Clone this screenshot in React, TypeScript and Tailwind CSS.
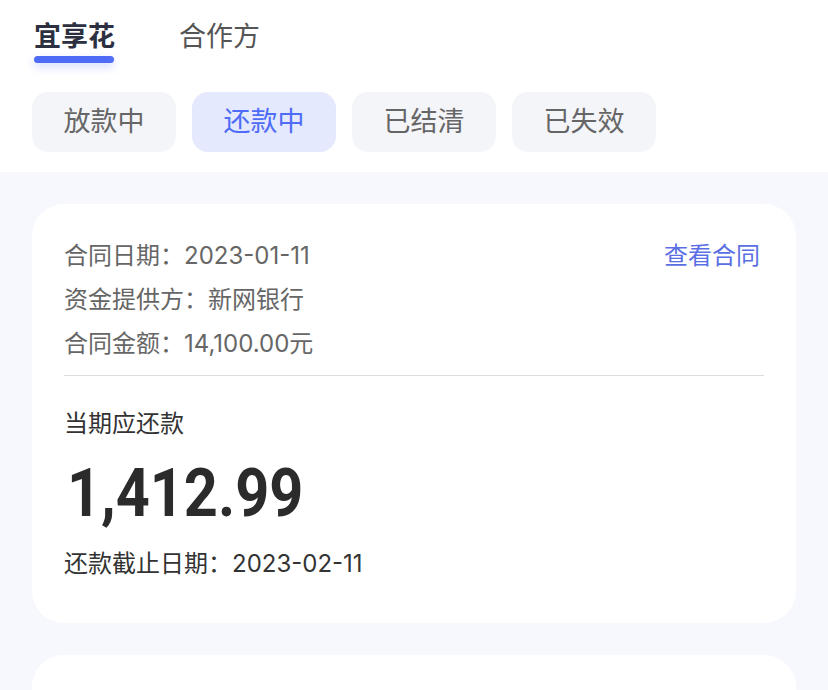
import { useState } from 'react';

// Loan contract list: top tabs, status pills and contract cards
const statusList = ['放款中', '还款中', '已结清', '已失效'];

const font = "font-['Inter','Noto_Sans_CJK_SC',sans-serif]";

const App = () => {
  const [tab, setTab] = useState(0);
  const [status, setStatus] = useState(1);

  return (
    <div className={`w-[828px] h-[690px] overflow-hidden bg-[#f7f8fd] ${font}`}>
      {/* Header */}
      <div className="bg-white px-8 pt-[19px] pb-5">
        <div className="flex gap-[64px] pl-[2px]">
          {['宜享花', '合作方'].map((t, i) => (
            <button key={t} onClick={() => setTab(i)} className="flex flex-col items-start">
              <span
                className={`text-[27px] leading-[36px] ${
                  i === tab ? 'font-bold text-[#2c3040]' : 'text-[#555]'
                }`}
              >
                {t}
              </span>
              <span
                className={`mt-px h-[7px] w-[80px] rounded-full ${
                  i === tab
                    ? 'bg-[#4f6cf6] shadow-[0_4px_8px_rgba(79,108,246,0.25)]'
                    : 'bg-transparent'
                }`}
              />
            </button>
          ))}
        </div>

        {/* Status pills */}
        <div className="mt-[29px] flex gap-4">
          {statusList.map((s, i) => (
            <button
              key={s}
              onClick={() => setStatus(i)}
              className={`h-[60px] w-[144px] rounded-2xl text-[27px] ${
                i === status ? 'bg-[#e4e9fe] text-[#4f6cf6]' : 'bg-[#f4f5f9] text-[#666]'
              }`}
            >
              {s}
            </button>
          ))}
        </div>
      </div>

      {/* Cards */}
      <div className="flex flex-col gap-8 px-8 pt-8">
        <div className="rounded-[32px] bg-white px-8 pt-[30px] pb-[37px]">
          <div className="flex justify-between">
            <div className="text-[24px] leading-[44px] text-[#666]">
              <div>合同日期：2023-01-11</div>
              <div>资金提供方：新网银行</div>
              <div>合同金额：14,100.00元</div>
            </div>
            <span className="mr-1 text-[24px] leading-[44px] text-[#5a6fe4]">查看合同</span>
          </div>
          <div className="mt-[9px] h-px bg-[#ddd]" />
          <div className="mt-[26px] text-[24px] leading-[44px] text-[#333]">当期应还款</div>
          <div className="h-[96px] leading-[96px] pl-[3px]">
            <span className="inline-block origin-left scale-x-[0.9] font-['Roboto',sans-serif] text-[66px] font-bold text-[#2b2b2b]">
              1,412.99
            </span>
          </div>
          <div className="text-[24px] leading-[44px] text-[#333]">还款截止日期：2023-02-11</div>
        </div>
        <div className="h-[200px] rounded-[32px] bg-white" />
      </div>
    </div>
  );
};

export default App;
